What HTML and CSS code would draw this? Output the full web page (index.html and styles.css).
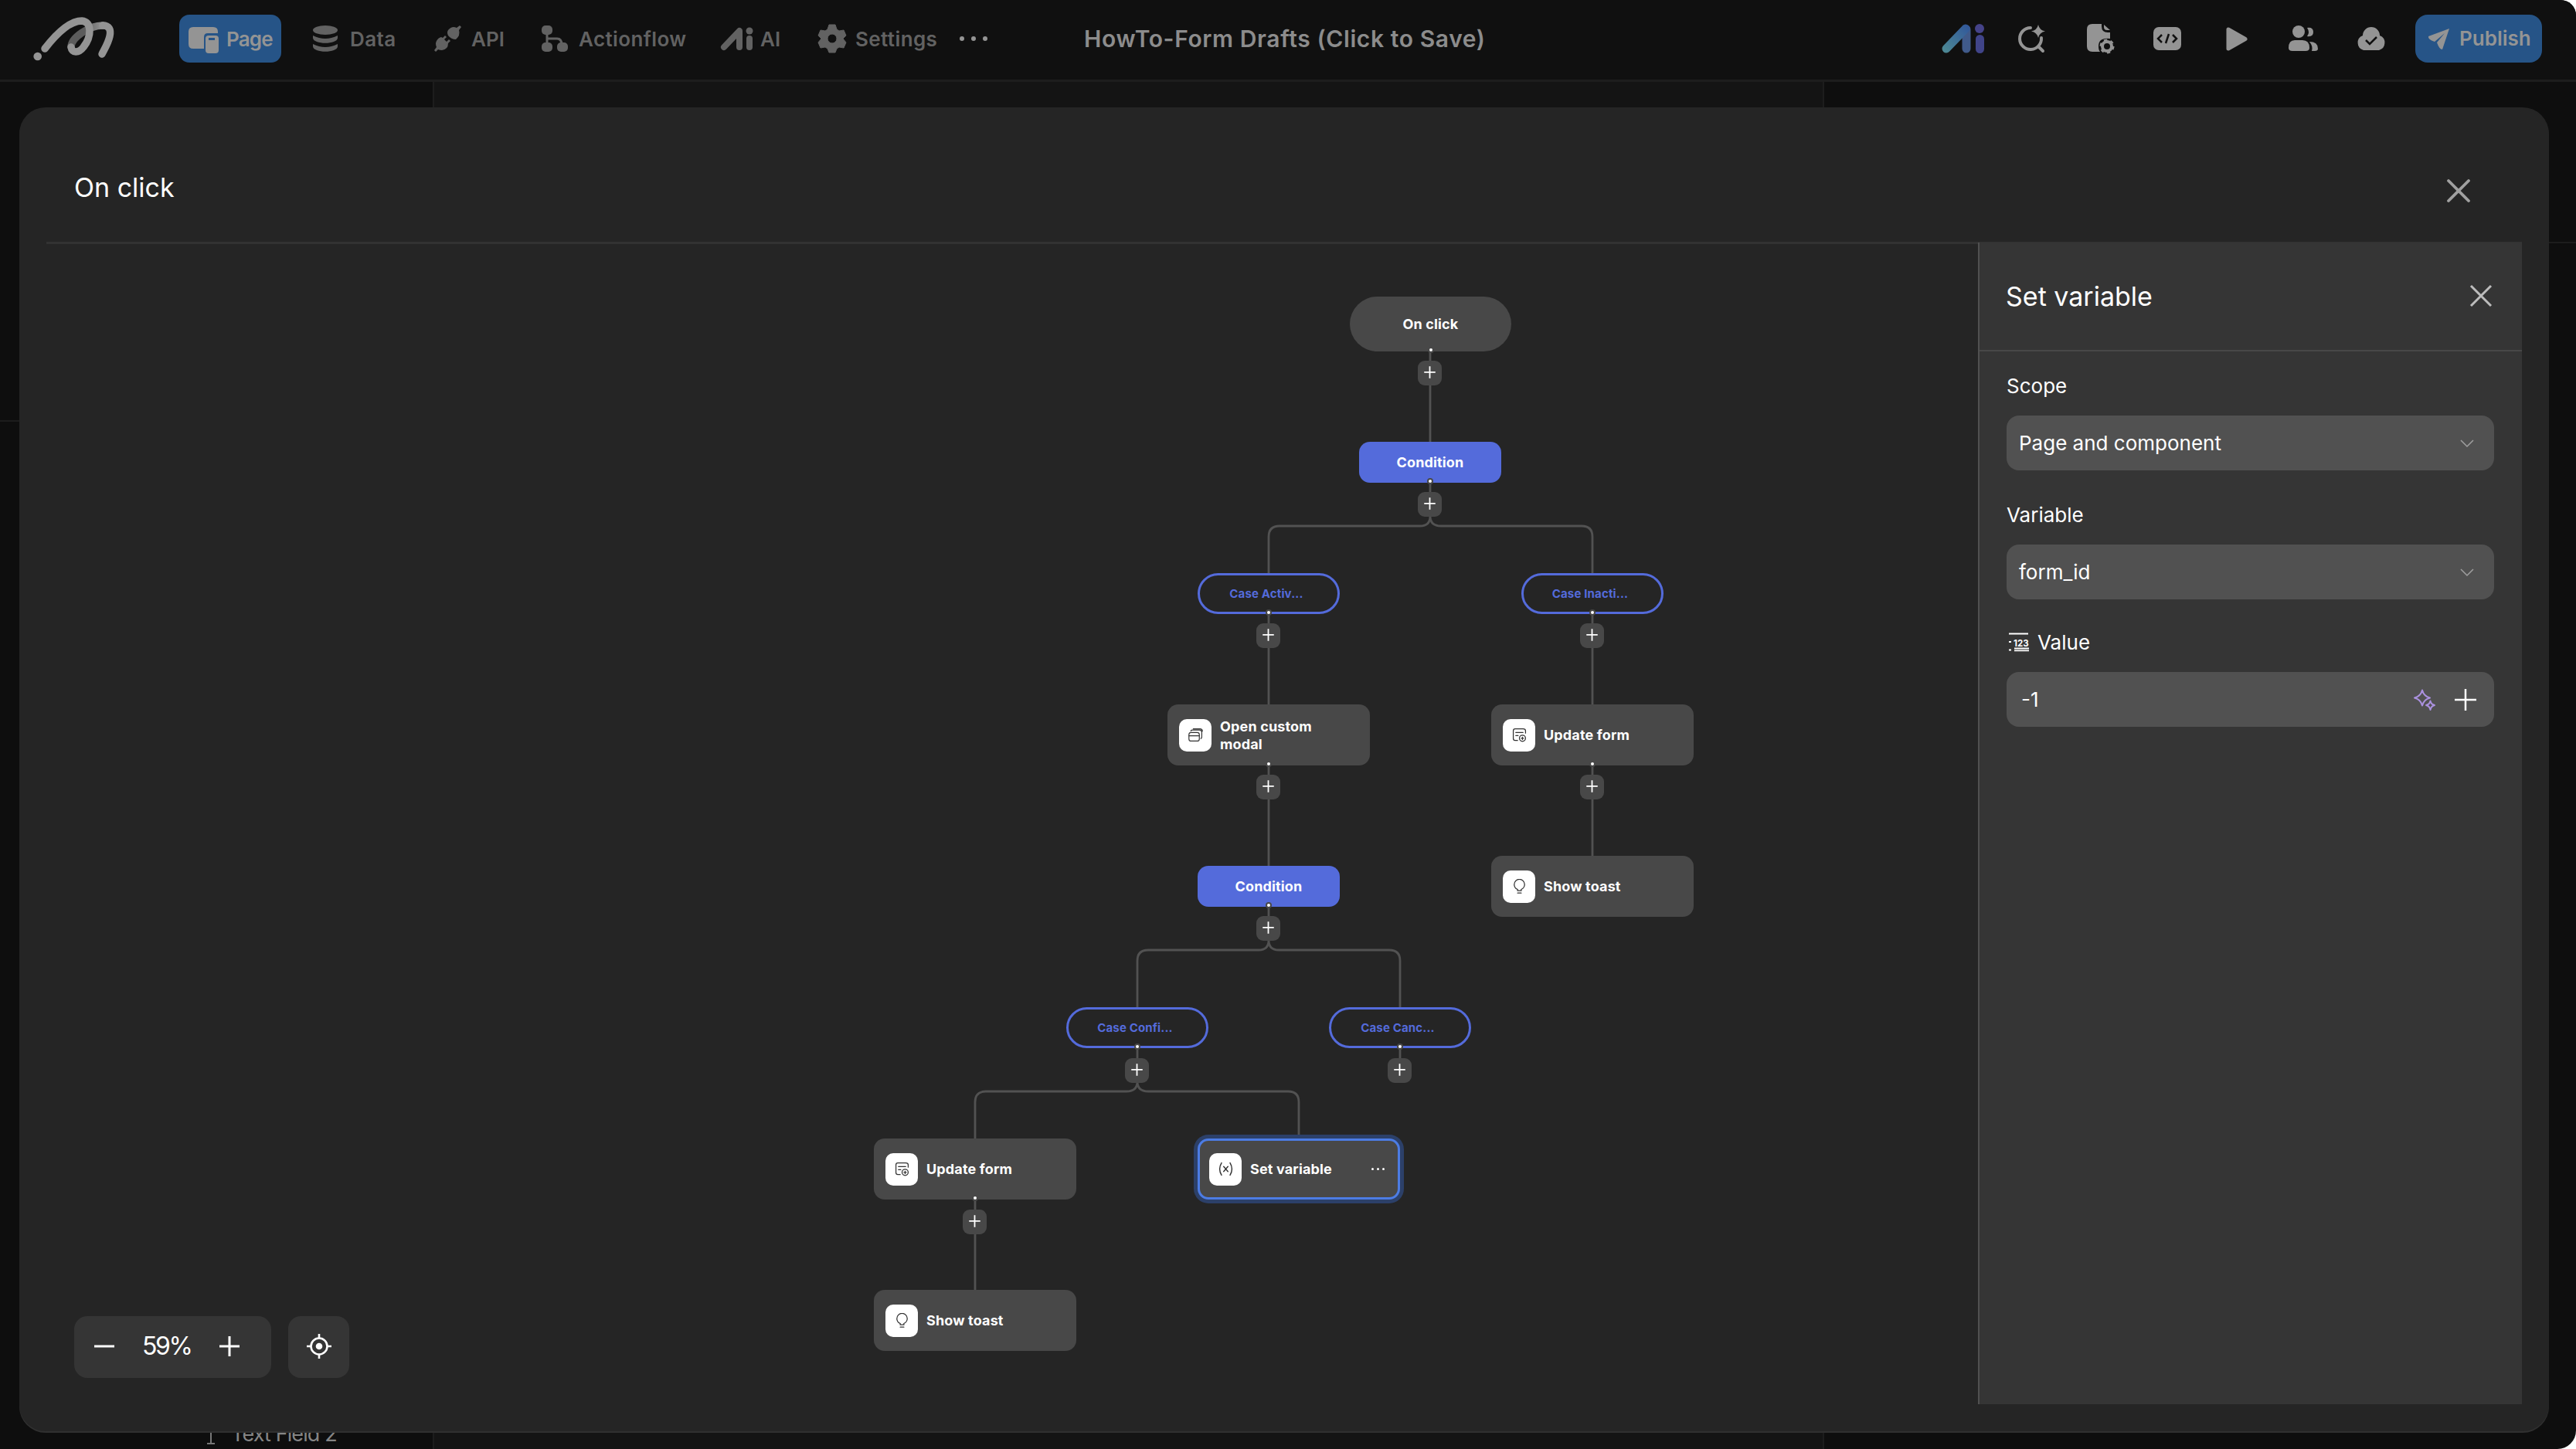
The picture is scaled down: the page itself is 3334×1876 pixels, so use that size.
FILE: index.html
```html
<!DOCTYPE html>
<html>
<head>
	<meta charset="UTF-8">
	<title>On click</title>
	<link rel="stylesheet" href="styles.css">
</head>
<body>
	<svg class="defs" width="0" height="0">
		<symbol id="plus" viewBox="0 0 32 32">
			<path d="M16 8v17M8 16.5h16" stroke="#fff" stroke-width="2"/>
		</symbol>
		<symbol id="i-modal" viewBox="0 0 24 24">
			<g fill="none" stroke="#333" stroke-width="1.5" stroke-linejoin="round" stroke-linecap="round">
				<rect x="1" y="8" width="17" height="14" rx="3.5"/>
				<path d="M1 13.5h17M4 5.5Q5 4 7 4h11q4 0 4 4v7q0 2-1.500 3M8 2h11q4 0 4 4"/>
			</g>
		</symbol>
		<symbol id="i-form" viewBox="0 0 24 24">
			<g fill="none" stroke="#333" stroke-width="1.6" stroke-linejoin="round" stroke-linecap="round">
				<path d="M9 21H5q-3 0-3-3V5q0-3 3-3h13q4 0 4 3v4M6 8h12M6 13h4"/>
				<circle cx="17" cy="17.5" r="5"/>
				<path d="M17 15.500v4M15 17.500h4"/>
			</g>
		</symbol>
		<symbol id="i-bulb" viewBox="0 0 24 24">
			<g fill="none" stroke="#333" stroke-width="1.6" stroke-linecap="round">
				<path d="M9 19v-2q-5.500-2.500-5.500-8a8.500 8.500 0 0 1 17 0q0 5.500-5.500 8V19zM9 23h6"/>
			</g>
		</symbol>
		<symbol id="i-var" viewBox="0 0 24 24">
			<path d="M5 2q-6 10 0 20M19 2q6 10 0 20M8.500 8l7 8M15.500 8l-7 8" fill="none" stroke="#333" stroke-width="1.8" stroke-linecap="round"/>
		</symbol>
	</svg>

	<div class="header">
		<svg class="logo" viewBox="0 0 106 58">
			<defs>
				<linearGradient id="g0" gradientUnits="userSpaceOnUse" x1="66" y1="0" x2="90" y2="0">
					<stop offset="0" stop-color="#5c5c5c"/>
					<stop offset="1" stop-color="#949494"/>
				</linearGradient>
			</defs>
			<g fill="none" stroke="#949494" stroke-width="9.5" stroke-linecap="round" stroke-linejoin="round">
				<path d="M49 40C49 28 72 12 90 12" stroke="url(#g0)"/>
				<path d="M90 12C98 12 101 17 99 26C97 35 93 41 89 49"/>
				<path d="M15 42C32 20 48 6 63 6C76 7 76 26 65 40C59 48 50 48 49 40"/>
			</g>
			<circle cx="5.700" cy="52" r="5.300" fill="#949494"/>
		</svg>
		<div class="nav">
			<div class="item page">
				<svg class="ico" viewBox="0 0 40 36">
					<path d="M6 1h26q6 0 6 6v2H25q-5 0-5 5v15H6q-6 0-6-6V7q0-6 6-6z" fill="#949494"/>
					<path d="M26 12h9q4 0 4 4v15q0 4-4 4h-9q-4 0-4-4V16q0-4 4-4zm0 3v3h8v-3z" fill="#949494" fill-rule="evenodd"/>
				</svg>
				<span>Page</span>
			</div>
			<div class="item data">
				<svg class="ico" viewBox="0 0 32 34">
					<ellipse cx="16" cy="6" rx="16" ry="6"/>
					<path d="M0 13q16 8 32 0v3c0 9-32 9-32 0zM0 24q16 8 32 0v3c0 9-32 9-32 0z"/>
				</svg>
				<span>Data</span>
			</div>
			<div class="item api">
				<svg class="ico" viewBox="0 0 36 34">
					<path d="M18 6q5-6 11-3l4-3 2 2-3 4q2 7-4 12-6 0-10-5-2-4 0-7zM3 20q2-4 6-5l2 1 3-3 2 2-3 3 3 3 3-3 2 2-3 3q0 8-8 9-3 0-5-1l-3 3-2-2 3-4q-2-5 0-8z"/>
				</svg>
				<span>API</span>
			</div>
			<div class="item flow">
				<svg class="ico" viewBox="0 0 34 34">
					<rect width="14" height="12" rx="5"/>
					<rect y="22" width="14" height="12" rx="5"/>
					<rect x="20" y="22" width="14" height="12" rx="5"/>
					<path d="M7 8v18M7 17h13q6 0 6 8" fill="none" stroke="#626262" stroke-width="3"/>
				</svg>
				<span>Actionflow</span>
			</div>
			<div class="item ai">
				<svg class="ico" viewBox="0 0 42 30">
					<path d="M4 26L24 5V26" fill="none" stroke="#626262" stroke-width="8" stroke-linecap="round" stroke-linejoin="round"/>
					<circle cx="37" cy="5" r="4.500"/>
					<rect x="33" y="11" width="8" height="19" rx="4"/>
				</svg>
				<span>AI</span>
			</div>
			<div class="item set">
				<svg class="ico" viewBox="0 0 36 36">
					<path d="M14 0h8l2 6 3 2 6-1 3 7-4 4 4 5-3 7-6-1-3 2-2 5h-8l-2-5-3-2-6 1-3-7 4-5-4-4 3-7 6 1 3-2zM18 12a6 6 0 1 0 0 12a6 6 0 0 0 0-12z" fill-rule="evenodd" stroke="#626262" stroke-linejoin="round"/>
				</svg>
				<span>Settings</span>
			</div>
			<div class="more"><i></i><i></i><i></i></div>
		</div>
		<div class="project">HowTo-Form Drafts (Click to Save)</div>
		<div class="tools">
			<svg class="t-ai" viewBox="0 0 56 38">
				<defs>
					<linearGradient id="g1" gradientUnits="userSpaceOnUse" x1="4" y1="34" x2="34" y2="4">
						<stop offset="0" stop-color="#4c8794"/>
						<stop offset="1" stop-color="#32599a"/>
					</linearGradient>
				</defs>
				<path d="M32 7V32" stroke="#405a8a" stroke-width="11" stroke-linecap="round"/>
				<path d="M6 32L31 6" stroke="url(#g1)" stroke-width="11" stroke-linecap="round"/>
				<circle cx="49" cy="6" r="6" fill="#454389"/>
				<rect x="44" y="14" width="11" height="24" rx="5.500" fill="#404489"/>
			</svg>
			<svg class="t-loop" viewBox="0 0 36 36">
				<path d="M16 4A14 14 0 1 0 30 17M26 28l6 6" fill="none" stroke="#949494" stroke-width="4" stroke-linecap="round"/>
				<path d="M26 0q1.500 7 9 8.500q-7.500 1.500-9 8.500q-1.500-7-9-8.500q7.500-1.500 9-8.500z" fill="#949494"/>
			</svg>
			<svg class="t-file" viewBox="0 0 36 38">
				<path d="M7 0h12v3q0 8 8 8h3v8q-15-2-15 10 0 5 2 7H7q-7 0-7-7V7q0-7 7-7zM22 1l8 7h-4q-4 0-4-4z" fill="#949494"/>
				<circle cx="26" cy="29" r="6" fill="none" stroke="#949494" stroke-width="4"/>
				<circle cx="26" cy="29" r="8.300" fill="none" stroke="#949494" stroke-width="2.500" stroke-dasharray="4.300 4.400"/>
			</svg>
			<svg class="t-code" viewBox="0 0 36 30">
				<rect width="36" height="30" rx="7" fill="#949494"/>
				<path d="M11 10l-5 5 5 5M25 10l5 5-5 5M20 9l-4 12" fill="none" stroke="#101010" stroke-width="2.500"/>
			</svg>
			<svg class="t-play" viewBox="0 0 28 31">
				<path d="M3 3v25L25 15.500z" fill="#949494" stroke="#949494" stroke-width="5" stroke-linejoin="round"/>
			</svg>
			<svg class="t-people" viewBox="0 0 38 34">
				<g fill="#949494">
					<circle cx="13" cy="8" r="8"/>
					<path d="M0 29q0-10 8-10h10q9 0 9 10 0 4-5 4H5q-5 0-5-4zM24 3q8-1 8 5.500t-8 5.500q4-5 0-11zM27 21q11 0 11 9 0 3-4 3h-4q2-6-3-12z"/>
				</g>
			</svg>
			<svg class="t-cloud" viewBox="0 0 40 30">
				<path d="M9 11a11 11 0 0 1 22 0a10 10 0 0 1-1 19H10a10 10 0 0 1-1-19z" fill="#949494"/>
				<path d="M13 17l5 5 9-9" fill="none" stroke="#101010" stroke-width="2.500"/>
			</svg>
			<div class="publish">
				<svg class="plane" viewBox="0 0 28 27">
					<path d="M27 0L0 10q-1 4 8 7L21 6 11 18q3 9 7 9z" fill="#949494"/>
				</svg>
				<span>Publish</span>
			</div>
		</div>
	</div>

	<!-- editor behind the modal -->
	<div class="editor">
		<div class="side"><div class="sep"></div></div>
		<div class="stage"></div>
		<div class="attr"><div class="sep"></div></div>
	</div>
	<div class="layer"><i></i>Text Field 2</div>

	<div class="modal">
		<div class="m-head">
			<div class="m-title">On click</div>
			<svg class="close" viewBox="0 0 30 30"><path d="M2 2l26 26M28 2L2 28"/></svg>
		</div>
		<div class="m-body">
			<div class="graph">
				<svg class="lines" viewBox="0 0 2500 1504">
					<!-- origin of the canvas is 60,314 -->
					<g transform="translate(-60 -314)">
						<path d="M1851 454V572M1851 624V668Q1851 681 1838 681H1656Q1642 681 1642 695V742M1851 668Q1851 681 1865 681H2047Q2061 681 2061 695V742"/>
						<path d="M1642 795V912M1642 990V1122M2061 795V912M2061 990V1108"/>
						<path d="M1642 1174V1217Q1642 1230 1629 1230H1486Q1472 1230 1472 1244V1305M1642 1217Q1642 1230 1655 1230H1798Q1812 1230 1812 1244V1305M1812 1357V1372"/>
						<path d="M1472 1357V1400Q1472 1413 1458 1413H1276Q1262 1413 1262 1427V1475M1472 1400Q1472 1413 1486 1413H1667Q1681 1413 1681 1427V1475M1262 1553V1671"/>
					</g>
				</svg>
				<div class="node start" style="left:1687px;top:70px">On click</div>
				<div class="node cond" style="left:1699px;top:258px">Condition</div>
				<div class="node case" style="left:1490px;top:428px">Case Activ...</div>
				<div class="node case" style="left:1909px;top:428px">Case Inacti...</div>
				<div class="node card" style="left:1451px;top:598px"><span class="box"><svg><use href="#i-modal"/></svg></span><p>Open custom modal</p></div>
				<div class="node card" style="left:1870px;top:598px"><span class="box"><svg><use href="#i-form"/></svg></span><p>Update form</p></div>
				<div class="node card end" style="left:1870px;top:794px"><span class="box"><svg><use href="#i-bulb"/></svg></span><p>Show toast</p></div>
				<div class="node cond" style="left:1490px;top:807px">Condition</div>
				<div class="node case" style="left:1320px;top:990px">Case Confi...</div>
				<div class="node case" style="left:1660px;top:990px">Case Canc...</div>
				<div class="node card" style="left:1071px;top:1160px"><span class="box"><svg><use href="#i-form"/></svg></span><p>Update form</p></div>
				<div class="node card on end" style="left:1490px;top:1160px"><span class="box"><svg><use href="#i-var"/></svg></span><p>Set variable</p><b class="dots"><i></i><i></i><i></i></b></div>
				<div class="node card end" style="left:1071px;top:1356px"><span class="box"><svg><use href="#i-bulb"/></svg></span><p>Show toast</p></div>

				<div class="add" style="left:1775px;top:153px"><svg><use href="#plus"/></svg></div>
				<div class="add" style="left:1775px;top:323px"><svg><use href="#plus"/></svg></div>
				<div class="add" style="left:1566px;top:493px"><svg><use href="#plus"/></svg></div>
				<div class="add" style="left:1985px;top:493px"><svg><use href="#plus"/></svg></div>
				<div class="add" style="left:1566px;top:689px"><svg><use href="#plus"/></svg></div>
				<div class="add" style="left:1985px;top:689px"><svg><use href="#plus"/></svg></div>
				<div class="add" style="left:1566px;top:872px"><svg><use href="#plus"/></svg></div>
				<div class="add" style="left:1396px;top:1056px"><svg><use href="#plus"/></svg></div>
				<div class="add" style="left:1736px;top:1056px"><svg><use href="#plus"/></svg></div>
				<div class="add" style="left:1186px;top:1252px"><svg><use href="#plus"/></svg></div>

				<div class="zoom">
					<div class="scale">
						<svg class="z-ico" viewBox="0 0 26 26"><path d="M0 13h26"/></svg>
						<span>59%</span>
						<svg class="z-ico" viewBox="0 0 26 26"><path d="M0 13h26M13 0v26"/></svg>
					</div>
					<div class="locate">
						<svg viewBox="0 0 32 32">
							<circle cx="16" cy="16" r="10.500" fill="none" stroke="#fff" stroke-width="2.600"/>
							<circle cx="16" cy="16" r="4.300" fill="#fff"/>
							<path d="M16 0v6M16 26v6M0 16h6M26 16h6" stroke="#fff" stroke-width="2.600"/>
						</svg>
					</div>
				</div>
			</div>
			<div class="panel">
				<div class="p-head">
					<span>Set variable</span>
					<svg viewBox="0 0 28 28"><path d="M1 1l26 26M27 1L1 27"/></svg>
				</div>
				<div class="form">
					<div class="label scope">Scope</div>
					<div class="select"><span>Page and component</span><svg class="arrow" viewBox="0 0 18 10"><path d="M1 1l8 8 8-8"/></svg></div>
					<div class="label">Variable</div>
					<div class="select"><span>form_id</span><svg class="arrow" viewBox="0 0 18 10"><path d="M1 1l8 8 8-8"/></svg></div>
					<div class="label value">
						<svg class="num" viewBox="0 0 28 24">
							<path d="M1 1.500h25M1 12h3M1 22.500h3M8 20.500h19M8 23.300h19" stroke="#fff" stroke-width="1.800"/>
							<text x="7" y="18" font-size="11.500" font-weight="700" fill="#fff">123</text>
						</svg>
						<span>Value</span>
					</div>
					<div class="select"><span class="num-val">-1</span>
						<svg class="spark" viewBox="0 0 28 28">
							<path d="M11 1.500q2 8 10 10q-8 2-10 10q-2-8-10-10q8-2 10-10zM21.500 15.500q1 4.500 5.500 5.500q-4.500 1-5.500 6q-1-5-5.500-6q4.500-1 5.500-5.500z"/>
						</svg>
						<svg class="insert" viewBox="0 0 28 28"><path d="M14 0v28M0 14h28"/></svg>
					</div>
				</div>
			</div>
		</div>
	</div>
</body>
</html>
```
FILE: styles.css
```css
*,
*::after{
	box-sizing: border-box;
}
html{
	background: #fff;
}
body{
	position: relative;
	margin: 0;
	width: 3334px;
	height: 1876px;
	overflow: hidden;
	border-radius: 0 20px 24px 0;
	background: #0e0e0e;
	color: #fff;
	font-family: Inter, "Noto Sans", sans-serif;
}
svg{
	display: block;
	flex: none;
	overflow: visible;
}
p{
	margin: 0;
}
.defs{
	position: absolute;
}

/* header */
.header{
	display: flex;
	align-items: center;
	height: 106px;
	padding: 0 44px 3px 43px;
	border-bottom: 3px solid #1d1d1d;
	background: #101010;
	color: #626262;
	font-size: 26px;
	font-weight: 600;
}
.header span,
.project{
	white-space: nowrap;
}
.logo{
	width: 106px;
	height: 58px;
}
.nav{
	display: flex;
	align-items: center;
	margin-left: 83px;
}
.item{
	display: flex;
	flex: none;
	align-items: center;
	height: 62px;
	fill: #626262;
}
.item.page{
	width: 132px;
	padding-left: 12px;
	border-radius: 13px;
	background: #265487;
	color: #949494;
}
.page .ico{
	width: 40px;
	height: 36px;
	margin: 4px 9px 0 0;
}
.page span{
	letter-spacing: -0.8px;
}
.data{
	width: 157px;
	padding-left: 41px;
}
.data .ico{
	width: 32px;
	height: 34px;
	margin-right: 16px;
}
.data span{
	letter-spacing: 0.4px;
}
.api{
	width: 139px;
	padding-left: 41px;
}
.api .ico{
	width: 36px;
	height: 34px;
	margin-right: 12px;
}
.flow{
	width: 233px;
	padding-left: 41px;
}
.flow .ico{
	width: 34px;
	height: 34px;
	margin-right: 14px;
}
.flow span,
.set span{
	letter-spacing: 0.4px;
}
.ai{
	width: 125px;
	padding-left: 40px;
}
.ai .ico{
	width: 42px;
	height: 30px;
	margin-right: 9px;
}
.set{
	width: 205px;
	padding-left: 41px;
}
.set .ico{
	width: 36px;
	height: 36px;
	margin-right: 12px;
}
.more{
	display: flex;
	gap: 9px;
	margin-left: 19px;
}
.more i{
	width: 6px;
	height: 6px;
	border-radius: 50%;
	background: #949494;
}
.project{
	width: 520px;
	margin-left: 125px;
	color: #8c8c8c;
	font-size: 30px;
	letter-spacing: 0.6px;
}
.tools{
	display: flex;
	align-items: center;
	margin-left: auto;
}
.t-ai{
	width: 56px;
	height: 38px;
	margin-right: 43px;
}
.t-loop{
	width: 36px;
	height: 36px;
	margin-right: 53px;
}
.t-file{
	width: 36px;
	height: 38px;
	margin-right: 50px;
}
.t-code{
	width: 36px;
	height: 30px;
	margin-right: 58px;
}
.t-play{
	width: 28px;
	height: 31px;
	margin-right: 53px;
}
.t-people{
	width: 38px;
	height: 34px;
	margin-right: 49px;
}
.t-cloud{
	width: 40px;
	height: 30px;
	margin-right: 37px;
}
.publish{
	display: flex;
	align-items: center;
	width: 164px;
	height: 62px;
	padding-left: 17px;
	border-radius: 16px;
	background: #265487;
	color: #949494;
}
.publish span{
	margin-top: -2px;
}
.plane{
	width: 28px;
	height: 27px;
	margin-right: 12px;
}

/* editor */
.editor{
	display: flex;
	height: 1770px;
}
.side{
	width: 562px;
	padding-top: 438px;
	border-right: 2px solid #1d1d1d;
}
.stage{
	width: 1797px;
	background: #141414;
}
.attr{
	flex: 1;
	padding-top: 207px;
	border-left: 2px solid #1d1d1d;
}
.sep{
	height: 2px;
	background: #1d1d1d;
}
.layer{
	position: absolute;
	left: 268px;
	top: 1838px;
	display: flex;
	align-items: flex-end;
	gap: 21px;
	color: #858585;
	font-size: 27px;
	line-height: 38px;
	letter-spacing: -0.9px;
}
.layer i{
	width: 10px;
	height: 30px;
	margin-bottom: 6px;
	border-bottom: 2px solid #777;
	background: linear-gradient(#777, #777) center / 2px 100% no-repeat;
}

/* modal */
.modal{
	position: absolute;
	left: 25px;
	top: 139px;
	width: 3274px;
	height: 1714px;
	padding: 0 35px;
	border-radius: 34px;
	background: #252525;
	box-shadow: 0 2px 0 #303030;
}
.m-head{
	display: flex;
	align-items: center;
	justify-content: space-between;
	height: 177px;
	padding: 32px 67px 0 36px;
	border-bottom: 3px solid #323232;
}
.m-title{
	font-size: 34px;
}
.close{
	width: 30px;
	height: 30px;
	margin-top: 9px;
	fill: none;
	stroke: #a0a0a0;
	stroke-width: 3.8;
	stroke-linecap: round;
}
.m-body{
	display: flex;
	height: 1504px;
	margin-top: -2px;
}
.graph{
	position: relative;
	flex: none;
	width: 2500px;
}
.lines{
	width: 2500px;
	height: 1504px;
	fill: none;
	stroke: #525252;
	stroke-width: 2.8;
}
.node{
	position: absolute;
	display: flex;
	align-items: center;
	justify-content: center;
	font-size: 18px;
	font-weight: 700;
	letter-spacing: 0.15px;
}
.start{
	width: 209px;
	height: 71px;
	border-radius: 36px;
	background: #484848;
}
.cond{
	width: 184px;
	height: 53px;
	border-radius: 14px;
	background: #546bdb;
}
.case{
	width: 184px;
	height: 53px;
	border: 3px solid #546bdb;
	border-radius: 27px;
	padding-right: 6px;
	background: #252525;
	color: #546bdb;
	font-size: 15px;
}
.card{
	justify-content: flex-start;
	width: 262px;
	height: 79px;
	padding-left: 15px;
	border-radius: 14px;
	background: #484848;
	line-height: 23px;
}
.card p{
	width: 140px;
}
.card.on{
	padding-left: 12px;
	border: 3px solid #4c7ce4;
	box-shadow: 0 0 0 5px #2c4069;
}
.box{
	display: flex;
	align-items: center;
	justify-content: center;
	width: 42px;
	height: 42px;
	margin-right: 11px;
	border-radius: 10px;
	background: #fff;
}
.box svg{
	width: 19px;
	height: 19px;
}
.dots{
	display: flex;
	gap: 4px;
	margin-left: 17px;
}
.dots i{
	width: 3px;
	height: 3px;
	border-radius: 50%;
	background: #fff;
}
/* connection point under a node */
.node::after{
	content: "";
	position: absolute;
	left: 50%;
	bottom: -2px;
	width: 8px;
	height: 8px;
	margin-left: -4px;
	border: 2px solid #484848;
	border-radius: 50%;
	background: #fff;
}
.case::after{
	bottom: -5px;
}
.node.end::after{
	display: none;
}
.add{
	position: absolute;
	width: 31px;
	height: 32px;
	border-radius: 9px;
	background: #484848;
}
.add svg{
	width: 31px;
	height: 29px;
}
.zoom{
	position: absolute;
	left: 36px;
	top: 1390px;
	display: flex;
	gap: 22px;
}
.scale{
	display: flex;
	align-items: center;
	width: 255px;
	height: 80px;
	padding: 0 26px 3px;
	border-radius: 17px;
	background: #353535;
	font-size: 32px;
}
.scale span{
	width: 60px;
	margin: 0 40px 0 36px;
	letter-spacing: -2.4px;
}
.z-ico{
	width: 26px;
	height: 26px;
	stroke: #fff;
	stroke-width: 3;
}
.locate{
	display: flex;
	align-items: center;
	justify-content: center;
	width: 79px;
	height: 80px;
	padding-bottom: 3px;
	border-radius: 16px;
	background: #353535;
}
.locate svg{
	width: 32px;
	height: 32px;
}

/* right panel */
.panel{
	flex: 1;
	border-left: 2px solid #505050;
	background: #353535;
}
.p-head{
	display: flex;
	align-items: center;
	justify-content: space-between;
	height: 141px;
	padding: 0 39px 0 34px;
	border-bottom: 2px solid #484848;
	font-size: 34px;
}
.p-head svg{
	width: 28px;
	height: 28px;
	margin-bottom: 2px;
	fill: none;
	stroke: #bdbdbd;
	stroke-width: 3;
}
.form{
	padding: 0 36px 0 35px;
	font-size: 26px;
}
.label{
	display: flex;
	align-items: center;
	height: 34px;
	margin: 40px 0 22px;
}
.label.scope{
	margin-top: 27px;
}
.label.value{
	margin-top: 38px;
}
.select{
	display: flex;
	align-items: center;
	height: 71px;
	padding: 0 26px 0 16px;
	border-radius: 16px;
	background: #515151;
}
.select span{
	margin-right: auto;
}
.arrow{
	width: 18px;
	height: 10px;
	fill: none;
	stroke: #a0a0a0;
	stroke-width: 1.5;
}
.num{
	width: 28px;
	height: 24px;
	margin: 0 10px 0 2px;
}
.num-val{
	padding-left: 3px;
}
.spark{
	width: 28px;
	height: 28px;
	margin-right: 25px;
	fill: none;
	stroke: #ab91e0;
	stroke-width: 2;
	stroke-linejoin: round;
}
.insert{
	width: 28px;
	height: 28px;
	margin-right: -3px;
	stroke: #fff;
	stroke-width: 2.5;
}
```
